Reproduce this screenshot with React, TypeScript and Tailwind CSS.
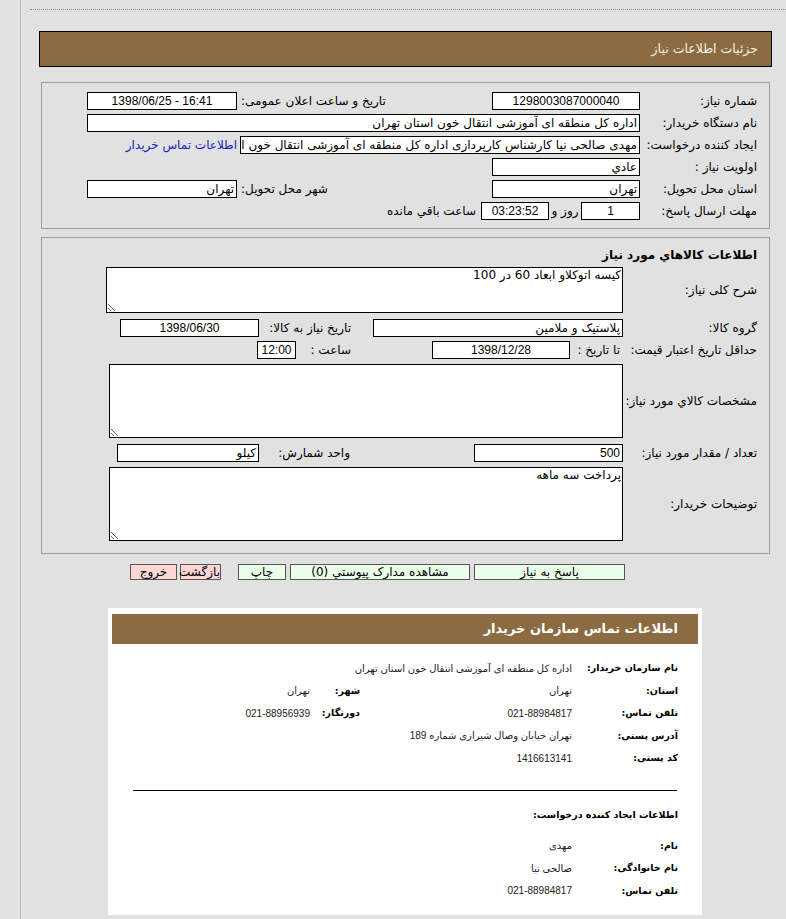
import React from 'react';

const box = 'h-[18px] border border-black bg-white text-[12px] leading-[16px] text-black';
const num = "font-['Liberation_Sans','DejaVu_Sans',sans-serif]";

function Field({ w, children, center, ltr, digits }: { w: string; children?: React.ReactNode; center?: boolean; ltr?: boolean; digits?: boolean }) {
  return (
    <div
      dir={ltr ? 'ltr' : undefined}
      className={`${box} ${w} ${digits ? num : ''} shrink-0 overflow-hidden whitespace-nowrap px-[2px] ${center ? 'text-center' : 'text-right'}`}
    >
      {children}
    </div>
  );
}

function Area({ w, h, value }: { w: string; h: string; value?: string }) {
  return (
    <textarea
      readOnly
      value={value ?? ''}
      className={`${w} ${h} shrink-0 border border-black bg-white px-[1px] py-0 text-[12px] leading-[15px] text-black outline-none`}
    />
  );
}

function Label1({ children }: { children: React.ReactNode }) {
  return <div className="w-[129px] shrink-0 pr-[12px] text-right">{children}</div>;
}

function Label2({ children }: { children: React.ReactNode }) {
  return <div className="w-[146px] shrink-0 pr-[12px] text-right">{children}</div>;
}

function InfoRow({ label, value, label2, value2 }: { label: string; value: string; label2?: string; value2?: string }) {
  return (
    <div className="flex h-[22.5px] items-center whitespace-nowrap">
      <div className="w-[106px] shrink-0 text-[9.5px] font-bold">{label}</div>
      <div className={`w-[212px] shrink-0 text-[10px] text-[#222] ${num}`}>{value}</div>
      {label2 && <div className="w-[50px] shrink-0 text-[9.5px] font-bold">{label2}</div>}
      {value2 && <div className={`text-[10px] text-[#222] ${num}`}>{value2}</div>}
    </div>
  );
}

export default function App() {
  return (
    <div
      dir="rtl"
      className="min-h-[919px] bg-[#e1e1e1] pl-[20px] font-['DejaVu_Sans',sans-serif] text-[12px] text-black"
    >
      <div dir="ltr" className="min-h-[919px] border-l border-[#bcbcbc] pt-[9px]">
        <div className="ml-[9px] border-t border-dotted border-[#8a8a8a]" />

        {/* header */}
        <div
          dir="rtl"
          className="ml-[18px] mr-[14px] mt-[21px] flex h-[36px] items-center border border-black bg-[#8b6c42] pr-[13px] text-[12.5px] text-[#f4efe6]"
        >
          جزئیات اطلاعات نیاز
        </div>

        {/* section 1 */}
        <div dir="rtl" className="ml-[20px] mr-[16px] mt-[15px] border border-[#9e9e9e] pb-[6px] pt-[7px]">
          <div className="flex h-[22px] items-center">
            <Label1>شماره نیاز:</Label1>
            <Field w="w-[148px]" center digits>1298003087000040</Field>
            <div className="w-[255px] shrink-0 pl-[4px] text-left">تاریخ و ساعت اعلان عمومی:</div>
            <Field w="w-[150px]" center ltr digits>1398/06/25 - 16:41</Field>
          </div>
          <div className="flex h-[22px] items-center">
            <Label1>نام دستگاه خریدار:</Label1>
            <Field w="w-[553px]">اداره کل منطقه ای آموزشی انتقال خون استان تهران</Field>
          </div>
          <div className="flex h-[22px] items-center">
            <Label1>ایجاد کننده درخواست:</Label1>
            <Field w="w-[400px]">مهدی صالحی نیا کارشناس کارپردازی اداره کل منطقه ای آموزشی انتقال خون استان تهران</Field>
            <a className="mr-[3px] whitespace-nowrap text-[#2020c0]">اطلاعات تماس خریدار</a>
          </div>
          <div className="flex h-[22px] items-center">
            <Label1>اولویت نیاز :</Label1>
            <Field w="w-[148px]">عادي</Field>
          </div>
          <div className="flex h-[22px] items-center">
            <Label1>استان محل تحویل:</Label1>
            <Field w="w-[148px]">تهران</Field>
            <div className="w-[255px] shrink-0 pl-[4px] text-left">شهر محل تحویل:</div>
            <Field w="w-[150px]">تهران</Field>
          </div>
          <div className="flex h-[22px] items-center">
            <Label1>مهلت ارسال پاسخ:</Label1>
            <Field w="w-[59px]" center digits>1</Field>
            <div className="w-[32px] shrink-0 text-center">روز و</div>
            <Field w="w-[68px]" center digits>03:23:52</Field>
            <div className="mr-[5px]">ساعت باقي مانده</div>
          </div>
        </div>

        {/* section 2 */}
        <div dir="rtl" className="ml-[20px] mr-[16px] mt-[8px] border border-[#9e9e9e] pb-[12px] pt-[8px]">
          <div className="h-[18px] pr-[12px] font-bold leading-[18px]">اطلاعات كالاهاي مورد نياز</div>
          <div className="mt-[3px] flex items-center">
            <Label2>شرح کلی نیاز:</Label2>
            <Area w="w-[517px]" h="h-[46px]" value="کیسه اتوکلاو ابعاد 60 در 100" />
          </div>
          <div className="mt-[4px] flex h-[22px] items-center">
            <Label2>گروه کالا:</Label2>
            <Field w="w-[250px]">پلاستیک و ملامین</Field>
            <div className="w-[114px] shrink-0 pr-[22px]">تاریخ نیاز به کالا:</div>
            <Field w="w-[139px]" center digits>1398/06/30</Field>
          </div>
          <div className="flex h-[22px] items-center">
            <Label2>حداقل تاریخ اعتبار قیمت:</Label2>
            <div className="w-[53px] shrink-0 pr-[3px]">تا تاریخ :</div>
            <Field w="w-[138px]" center digits>1398/12/28</Field>
            <div className="w-[136px] shrink-0 pr-[81px]">ساعت :</div>
            <Field w="w-[39px]" center digits>12:00</Field>
          </div>
          <div className="mt-[3px] flex items-center">
            <Label2>مشخصات کالاي مورد نیاز:</Label2>
            <Area w="w-[514px]" h="h-[74px]" />
          </div>
          <div className="mt-[4px] flex h-[22px] items-center">
            <Label2>تعداد / مقدار مورد نیاز:</Label2>
            <Field w="w-[149px]" digits>500</Field>
            <div className="w-[215px] shrink-0 pr-[124px]">واحد شمارش:</div>
            <Field w="w-[142px]">کیلو</Field>
          </div>
          <div className="mt-[3px] flex items-center">
            <Label2>توضیحات خریدار:</Label2>
            <Area w="w-[514px]" h="h-[74px]" value="پرداخت سه ماهه" />
          </div>
        </div>

        {/* buttons */}
        <div dir="rtl" className="ml-[20px] mr-[16px] mt-[10px] flex h-[16px] items-stretch pr-[145px] text-[12px]">
          <button className="w-[151px] border border-[#555] bg-[#eaffea] leading-[14px]">پاسخ به نیاز</button>
          <button className="mr-[4px] w-[180px] border border-[#555] bg-[#eaffea] leading-[14px]">مشاهده مدارک پیوستي (0)</button>
          <button className="mr-[4px] w-[48px] border border-[#555] bg-[#eaffea] leading-[14px]">چاپ</button>
          <button className="mr-[17px] w-[41px] whitespace-nowrap border border-[#555] bg-[#ffd6d6] leading-[14px]">بازگشت</button>
          <button className="mr-[3px] w-[47px] border border-[#555] bg-[#ffd6d6] leading-[14px]">خروج</button>
        </div>

        {/* contact card */}
        <div dir="rtl" className="ml-[87px] mt-[28px] w-[594px] bg-white pb-[13px] pl-[4px] pr-[4px] pt-[6px]">
          <div className="flex h-[30px] items-center bg-[#8b6c42] pr-[20px] text-[13px] font-bold text-white">
            اطلاعات تماس سازمان خریدار
          </div>
          <div className="mt-[13px] pr-[20px]">
            <InfoRow label="نام سازمان خریدار:" value="اداره کل منطقه ای آموزشی انتقال خون استان تهران" />
            <InfoRow label="استان:" value="تهران" label2="شهر:" value2="تهران" />
            <InfoRow label="تلفن تماس:" value="021-88984817" label2="دورنگار:" value2="021-88956939" />
            <InfoRow label="آدرس پستی:" value="تهران خیابان وصال شیرازی شماره 189" />
            <InfoRow label="کد پستی:" value="1416613141" />
          </div>
          <div className="ml-[21px] mr-[21px] mt-[20px] border-t border-black" />
          <div className="mt-[14px] h-[20px] pr-[20px] text-[9.5px] font-bold leading-[20px]">اطلاعات ایجاد کننده درخواست:</div>
          <div className="mt-[10px] pr-[20px]">
            <InfoRow label="نام:" value="مهدی" />
            <InfoRow label="نام خانوادگی:" value="صالحی نیا" />
            <InfoRow label="تلفن تماس:" value="021-88984817" />
          </div>
        </div>
      </div>
    </div>
  );
}
